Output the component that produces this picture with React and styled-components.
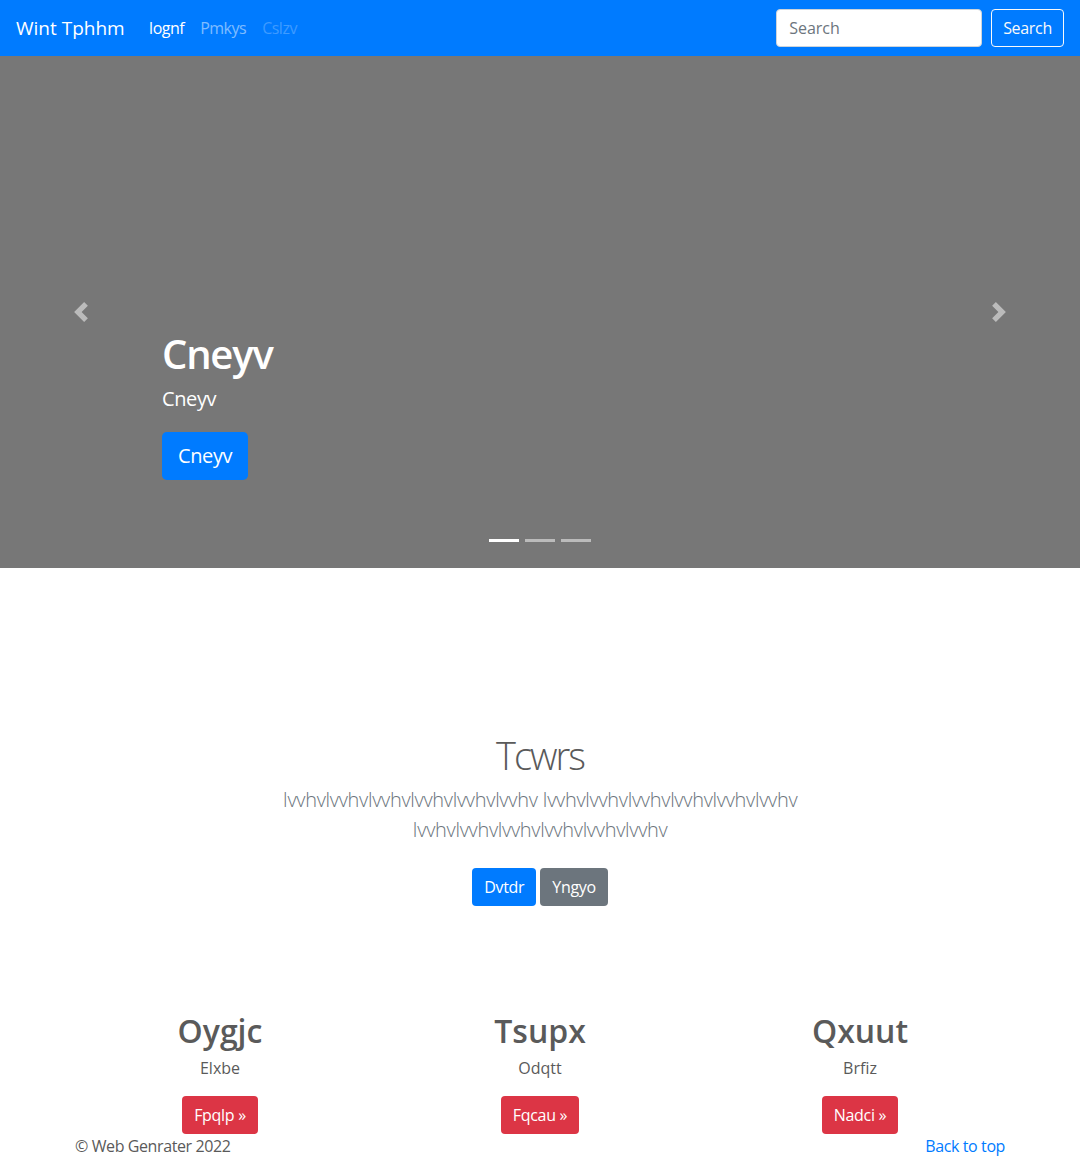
import React from "react";
import styled, { createGlobalStyle } from "styled-components";

const Global = createGlobalStyle`
  html, body { margin: 0; padding: 0; }
  body {
    font-family: "Open Sans", "Noto Sans", "Liberation Sans", sans-serif;
    font-size: 16px;
    line-height: 1.5;
    color: #5a5a5a;
    background: #fff;
  }
  * { box-sizing: border-box; }
`;

const Navbar = styled.nav`
  height: 56px;
  background: #007bff;
  display: flex;
  align-items: center;
  padding: 8px 16px;
`;

const Brand = styled.a`
  font-size: 19px;
  line-height: 30px;
  color: #fff;
  margin-right: 16px;
  text-decoration: none;
  white-space: nowrap;
`;

const NavList = styled.ul`
  display: flex;
  list-style: none;
  margin: 0;
  padding: 0;
  flex: 1;
`;

const NavLink = styled.a`
  display: block;
  padding: 8px;
  text-decoration: none;
  letter-spacing: -0.5px;
  color: ${(p) =>
    p.$state === "active"
      ? "#fff"
      : p.$state === "disabled"
      ? "rgba(255,255,255,.25)"
      : "rgba(255,255,255,.5)"};
`;

const SearchForm = styled.form`
  display: flex;
  align-items: center;
  gap: 9px;
`;

const SearchInput = styled.input`
  width: 206px;
  height: 38px;
  padding: 6px 12px;
  font: inherit;
  font-size: 16px;
  color: #495057;
  border: 1px solid #ced4da;
  border-radius: 4px;
  background: #fff;
  &::placeholder { color: #6c757d; }
`;

const OutlineButton = styled.button`
  height: 38px;
  padding: 6px 11px;
  font: inherit;
  font-size: 16px;
  letter-spacing: -0.3px;
  color: #f8f9fa;
  background: transparent;
  border: 1px solid #f8f9fa;
  border-radius: 4px;
`;

const Carousel = styled.section`
  position: relative;
  height: 512px;
  background: #777;
  margin-bottom: 163px;
`;

const Control = styled.div`
  position: absolute;
  top: 0;
  bottom: 0;
  ${(p) => (p.$side === "left" ? "left: 0;" : "right: 0;")}
  width: 15%;
  display: flex;
  align-items: center;
  justify-content: center;
  opacity: 0.5;
`;

const Caption = styled.div`
  position: absolute;
  left: 15%;
  right: 15%;
  bottom: 88px;
  color: #fff;
  display: flex;
  flex-direction: column;
  align-items: flex-start;
`;

const CaptionTitle = styled.h1`
  margin: 0 0 8px;
  font-size: 40px;
  line-height: 48px;
  font-weight: 600;
  letter-spacing: -1.2px;
`;

const CaptionText = styled.p`
  margin: 1px 0 21px;
  font-size: 20px;
  line-height: 24px;
  letter-spacing: -0.4px;
`;

const Button = styled.a`
  display: inline-flex;
  align-items: center;
  justify-content: center;
  height: ${(p) => (p.$lg ? "48px" : "38px")};
  padding: ${(p) => (p.$lg ? "0 16px" : "0 12px")};
  font-size: ${(p) => (p.$lg ? "20px" : "16px")};
  letter-spacing: ${(p) => (p.$lg ? "-0.4px" : "-0.3px")};
  border-radius: ${(p) => (p.$lg ? "4.8px" : "4px")};
  color: #fff;
  text-decoration: none;
  white-space: nowrap;
  background: ${(p) =>
    p.$variant === "secondary"
      ? "#6c757d"
      : p.$variant === "danger"
      ? "#dc3545"
      : "#007bff"};
`;

const Indicators = styled.ol`
  position: absolute;
  left: 0;
  right: 0;
  bottom: 26px;
  margin: 0;
  padding: 0;
  list-style: none;
  display: flex;
  justify-content: center;
  gap: 6px;
`;

const Indicator = styled.li`
  width: 30px;
  height: 3px;
  background: ${(p) => (p.$active ? "#fff" : "rgba(255,255,255,.5)")};
`;

const Jumbo = styled.section`
  max-width: 640px;
  margin: 0 auto 106px;
  padding: 0 15px;
  text-align: center;
`;

const JumboTitle = styled.h1`
  margin: 0 0 6px;
  font-size: 38px;
  line-height: 48px;
  font-weight: 300;
  letter-spacing: -2px;
  color: #5a5a5a;
`;

const Lead = styled.p`
  margin: 0 0 23px;
  font-size: 20px;
  line-height: 30px;
  font-weight: 300;
  letter-spacing: -0.3px;
  color: #6c757d;
`;

const ButtonRow = styled.div`
  display: flex;
  justify-content: center;
  gap: 4px;
`;

const Container = styled.div`
  width: 960px;
  margin: 0 auto;
`;

const Row = styled.div`
  display: grid;
  grid-template-columns: repeat(3, 1fr);
`;

const Col = styled.div`
  padding: 0 15px;
  display: flex;
  flex-direction: column;
  align-items: center;
  text-align: center;
`;

const ColTitle = styled.h2`
  margin: 0 0 6px;
  font-size: 32px;
  line-height: 38px;
  font-weight: 600;
  color: #5a5a5a;
`;

const ColText = styled.p`
  margin: 0 0 16px;
  font-size: 16px;
  line-height: 24px;
`;

const Footer = styled.footer`
  width: 960px;
  margin: 0 auto;
  padding: 0 15px;
  display: flex;
  justify-content: space-between;
  line-height: 24px;
  letter-spacing: -0.4px;
`;

const TopLink = styled.a`
  color: #007bff;
  text-decoration: none;
`;

const Chevron = ({ dir }) => (
  <svg width="20" height="20" viewBox="0 0 8 8" fill="#fff">
    {dir === "left" ? (
      <path d="M5.25 0l-4 4 4 4 1.5-1.5L4.25 4l2.5-2.5L5.25 0z" />
    ) : (
      <path d="M2.75 0l-1.5 1.5L3.75 4l-2.5 2.5L2.75 8l4-4-4-4z" />
    )}
  </svg>
);

const cols = [
  { t: "Oygjc", d: "Elxbe", b: "Fpqlp" },
  { t: "Tsupx", d: "Odqtt", b: "Fqcau" },
  { t: "Qxuut", d: "Brfiz", b: "Nadci" },
];

export default function App() {
  return (
    <>
      <Global />
      <Navbar>
        <Brand href="#">Wint Tphhm</Brand>
        <NavList>
          <li><NavLink $state="active" href="#">Iognf</NavLink></li>
          <li><NavLink href="#">Pmkys</NavLink></li>
          <li><NavLink $state="disabled" href="#">Cslzv</NavLink></li>
        </NavList>
        <SearchForm onSubmit={(e) => e.preventDefault()}>
          <SearchInput placeholder="Search" />
          <OutlineButton type="submit">Search</OutlineButton>
        </SearchForm>
      </Navbar>

      <Carousel>
        <Control $side="left"><Chevron dir="left" /></Control>
        <Control $side="right"><Chevron dir="right" /></Control>
        <Caption>
          <CaptionTitle>Cneyv</CaptionTitle>
          <CaptionText>Cneyv</CaptionText>
          <Button $lg href="#">Cneyv</Button>
        </Caption>
        <Indicators>
          <Indicator $active />
          <Indicator />
          <Indicator />
        </Indicators>
      </Carousel>

      <Jumbo>
        <JumboTitle>Tcwrs</JumboTitle>
        <Lead>
          Ivvhvlvvhvlvvhvlvvhvlvvhvlvvhv Ivvhvlvvhvlvvhvlvvhvlvvhvlvvhv
          Ivvhvlvvhvlvvhvlvvhvlvvhvlvvhv
        </Lead>
        <ButtonRow>
          <Button href="#">Dvtdr</Button>
          <Button $variant="secondary" href="#">Yngyo</Button>
        </ButtonRow>
      </Jumbo>

      <Container>
        <Row>
          {cols.map((c) => (
            <Col key={c.t}>
              <ColTitle>{c.t}</ColTitle>
              <ColText>{c.d}</ColText>
              <Button $variant="danger" href="#">{c.b} »</Button>
            </Col>
          ))}
        </Row>
      </Container>

      <Footer>
        <span>© Web Genrater 2022</span>
        <TopLink href="#">Back to top</TopLink>
      </Footer>
    </>
  );
}
